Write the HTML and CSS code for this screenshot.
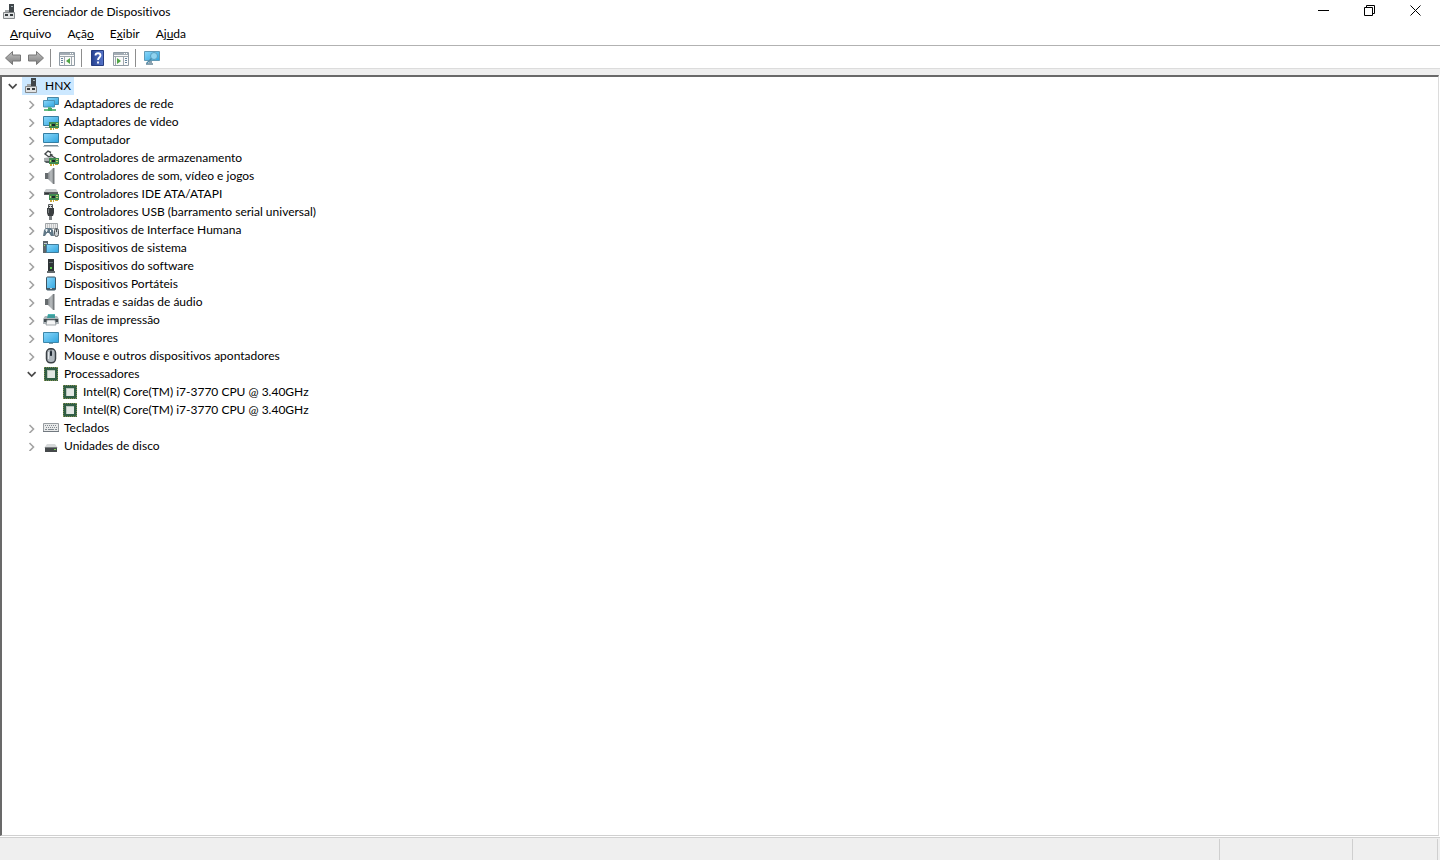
FILE: index.html
```html
<!DOCTYPE html>
<html lang="pt-BR">
<head>
<meta charset="utf-8">
<title>Gerenciador de Dispositivos</title>
<link rel="stylesheet" href="styles.css">
</head>
<body>
<svg class="defs" aria-hidden="true">
  <defs>
    <linearGradient id="g-screen" x1="0" y1="0" x2="1" y2="1"><stop offset="0" stop-color="#8bd8fb"/><stop offset="1" stop-color="#2fa4de"/></linearGradient>
    <linearGradient id="g-arrow" x1="0" y1="0" x2="0" y2="1"><stop offset="0" stop-color="#c2c2c2"/><stop offset="1" stop-color="#7c7c7c"/></linearGradient>
    <linearGradient id="g-metal" x1="0" y1="0" x2="1" y2="0"><stop offset="0" stop-color="#85898c"/><stop offset=".5" stop-color="#b9bdbf"/><stop offset="1" stop-color="#85898c"/></linearGradient>
    <linearGradient id="g-help" x1="0" y1="0" x2="1" y2="0"><stop offset="0" stop-color="#24408f"/><stop offset="1" stop-color="#5876cb"/></linearGradient>
  </defs>
  <symbol id="i-closed" viewBox="0 0 10 10"><path d="M2.500 2l4 4-4 4" fill="none" stroke="#a3a3a3" stroke-width="1.6"/></symbol>
  <symbol id="i-open" viewBox="0 0 10 10"><path d="M.8 3.200l3.900 3.800 3.900-3.800" fill="none" stroke="#484848" stroke-width="1.700"/></symbol>
  <symbol id="i-host" viewBox="0 0 16 16"><path d="M7 0h5v8H7z" fill="#40464a"/><path d="M9 2h2v1H9z" fill="#a7b4ba"/><path d="M3 6h4v3H3z" fill="#a4a8aa"/><path d="M1.500 8.500h11v6h-11z" fill="#e1e3e4" stroke="#85898b"/><path d="M3 10h3v2H3zM8 10h3v2H8z" fill="#353a3d"/></symbol>
  <symbol id="i-board" viewBox="0 0 10 8"><path d="M0 0h10v6H0z" fill="#3f8a50"/><path d="M1 6h2v2H1zM4 6h1v2H4zM6 6h3v1H6z" fill="#c9a938"/><path d="M3 2h3v2H3z" fill="#20262a"/><path d="M7 1h2v1H7zM7 3h2v1H7zM1 2h1v2H1z" fill="#c3d36c"/></symbol>
  <symbol id="i-network" viewBox="0 0 16 16"><path d="M4.500 1.500h11v7h-11z" fill="url(#g-screen)" stroke="#4886a4"/><path d="M.5 4.500h11v6.500H.5z" fill="url(#g-screen)" stroke="#4b92b5"/><path d="M5 11h3v2H5zM1 13h12v2H1z" fill="#66bb80"/><path d="M5 12h4v3H5z" fill="#40a764"/></symbol>
  <symbol id="i-video" viewBox="0 0 16 16"><path d="M.5 2.500h15v9H.5z" fill="url(#g-screen)" stroke="#397e9f"/><path d="M2 13h5v1H2z" fill="#94a2aa"/><use href="#i-board" x="6" y="8" width="10" height="8"/></symbol>
  <symbol id="i-computer" viewBox="0 0 16 16"><path d="M.5 1.500h15v9H.5z" fill="url(#g-screen)" stroke="#347ea3"/><path d="M1 13h14v1H1z" fill="#7c8d97"/><path d="M0 14h16v1H0z" fill="#b9c4ca"/></symbol>
  <symbol id="i-storage" viewBox="0 0 16 16"><path d="M8 2.500L5 1 2 4l4 3 3-2-2-1M7 5l7 4" fill="none" stroke="#44494b" stroke-width="1.400"/><path d="M1 8l7-1 6 2v3H2l-1-1z" fill="#a8adaf"/><path d="M1 11h7v2H3z" fill="#555e61"/><use href="#i-board" x="6" y="8" width="10" height="8"/></symbol>
  <symbol id="i-sound" viewBox="0 0 16 16"><path d="M2 5h3v6H2z" fill="#666b6e"/><path d="M5 5l5-5h1v16h-1l-5-5z" fill="url(#g-metal)"/><path d="M10 0h1.500v16H10z" fill="#777b7e"/></symbol>
  <symbol id="i-ide" viewBox="0 0 16 16"><path d="M3 3h10l2 3H1z" fill="#c5c9cb"/><path d="M1 6h14v3H1z" fill="#5a5f61"/><path d="M2 7h4v1H2z" fill="#303638"/><use href="#i-board" x="6" y="8" width="10" height="8"/></symbol>
  <symbol id="i-usb" viewBox="0 0 16 16"><path d="M5.500.5h4v4h-4z" fill="#d8dadb" stroke="#535759"/><path d="M6 2h1v1H6zM8 2h1v1H8z" fill="#333"/><path d="M4 4h7v5l-1 3H5L4 9z" fill="#3a3e40"/><path d="M5 5h1v4H5z" fill="#777c7e"/><path d="M6 12h3v4H6z" fill="#777c7e"/></symbol>
  <symbol id="i-hid" viewBox="0 0 16 16"><path d="M2.500 1.500h12v5h-12z" fill="#ececec" stroke="#a1a5a8"/><path d="M4 3h9M4 5h9" stroke="#9b9fa2" stroke-dasharray="1 1"/><path d="M1 8l2-2h5l2 2 1 6H8l-2-3H4l-2 3H0z" fill="#617887"/><path d="M2 8h3M3.500 7v3" stroke="#eef3f5"/><path d="M7 8h1v2H7z" fill="#fff"/><rect x="11.500" y="6.500" width="4" height="8" rx="2" fill="#cbd0d3" stroke="#52585c"/><path d="M13 7h1v3h-1z" fill="#4b5256"/></symbol>
  <symbol id="i-system" viewBox="0 0 16 16"><path d="M0 1h5v12H0z" fill="#5c6469"/><path d="M1 3h3v1H1z" fill="#c2d0d7"/><path d="M3.500 4.500h12v8h-12z" fill="url(#g-screen)" stroke="#407c9b"/><path d="M1 5h1v1H1z" fill="#8df05b"/></symbol>
  <symbol id="i-software" viewBox="0 0 16 16"><path d="M5 1h6v12H5z" fill="#2e3436"/><path d="M6 4h4v1H6z" fill="#677075"/><path d="M7 9h2v2H7z" fill="#59c94a"/><path d="M4 13h8v2H4z" fill="#62696c"/></symbol>
  <symbol id="i-portable" viewBox="0 0 16 16"><rect x="3.500" y="1" width="9" height="13" rx="1" fill="url(#g-screen)" stroke="#3d5462"/><path d="M4 12h8v2H4z" fill="#465b67"/><path d="M7 12h2v1H7z" fill="#b9cbd4"/></symbol>
  <symbol id="i-printer" viewBox="0 0 16 16"><path d="M5 2h7v4H4z" fill="#50b8b5"/><path d="M2 4h12l2 3v5H0V7z" fill="#aeb5b9"/><path d="M5 3h7v3H4z" fill="#3f9c9c"/><path d="M1 7h14v3H1z" fill="#424a4e"/><path d="M4 8h8l1 5H3z" fill="#f4f5f5" stroke="#7d858a" stroke-width=".7"/></symbol>
  <symbol id="i-monitor" viewBox="0 0 16 16"><path d="M.5 2.500h15v10H.5z" fill="url(#g-screen)" stroke="#3c87aa"/><path d="M6 13h4v1H6z" fill="#809aa7"/></symbol>
  <symbol id="i-mouse" viewBox="0 0 16 16"><rect x="3.500" y=".8" width="9" height="14" rx="4" fill="#b1b8be" stroke="#3b4146" stroke-width="1.500"/><path d="M8 1v7" stroke="#4b5359"/><rect x="7" y="3" width="2" height="5" rx="1" fill="#202a34"/><path d="M5.500 4v7" stroke="#e5e9ec"/></symbol>
  <symbol id="i-cpu" viewBox="0 0 16 16"><path d="M1 1h14v14H1z" fill="#315e45"/><path d="M1.500 1v14M14.500 1v14M1 1.500h14M1 14.500h14" stroke="#7f8d50" stroke-dasharray="1 1"/><path d="M4 4h8v8H4z" fill="#e2e7e4"/><path d="M4 4h8v1H5v7H4z" fill="#b9c4bd"/></symbol>
  <symbol id="i-keyboard" viewBox="0 0 16 16"><path d="M.5 3.500h15v8H.5z" fill="#e9eaea" stroke="#989da1"/><path d="M2 5.500h12M3 7.500h11" stroke="#828a91" stroke-dasharray="1 1"/><path d="M2 9.500h2M5 9.500h6M12 9.500h2" stroke="#828a91"/><path d="M0 11h16v1H0z" fill="#727980"/></symbol>
  <symbol id="i-disk" viewBox="0 0 16 16"><path d="M4 6h8l3 4H1z" fill="#d7d9da"/><path d="M2 9h12v5H2z" fill="#45494b"/><path d="M2 9h12v1H2z" fill="#7b8082"/><path d="M11 11h2v1h-2z" fill="#7bd453"/></symbol>
  <symbol id="i-back" viewBox="0 0 16 16"><path d="M.5 8l7-6.500V5h8v6h-8v3.500z" fill="url(#g-arrow)" stroke="#777"/></symbol>
  <symbol id="i-forward" viewBox="0 0 16 16"><path d="M15.500 8l-7-6.500V5h-8v6h8v3.500z" fill="url(#g-arrow)" stroke="#777"/></symbol>
  <symbol id="i-tree" viewBox="0 0 16 16"><path d="M.5 2.500h15v13H.5z" fill="#fafafa" stroke="#909ba4"/><path d="M1 3h14v2H1z" fill="#a4adb5"/><path d="M11 3h1v1h-1zM13 3h1v1h-1z" fill="#fff"/><path d="M1 6.500h14M5.500 7v8M12.500 7v8" stroke="#a0a8af"/><path d="M2 8.500h2M2 10.500h2M2 12.500h2" stroke="#67849d"/><path d="M11 8v6l-4-3z" fill="#4fa544"/></symbol>
  <symbol id="i-action" viewBox="0 0 16 16"><path d="M.5 2.500h15v13H.5z" fill="#fafafa" stroke="#909ba4"/><path d="M1 3h14v2H1z" fill="#a4adb5"/><path d="M11 3h1v1h-1zM13 3h1v1h-1z" fill="#fff"/><path d="M1 6.500h14M2.500 7v8M10.500 7v8" stroke="#a0a8af"/><path d="M12 8.500h2M12 10.500h2M12 12.500h2" stroke="#67849d"/><path d="M4 8v6l4-3z" fill="#4fa544"/></symbol>
  <symbol id="i-help" viewBox="0 0 16 16"><path d="M1.500.5h12v15h-12z" fill="url(#g-help)" stroke="#263c7f"/><path d="M5.500 5.500c0-3 5-3 5 0 0 2-2.500 2-2.500 4.500M8 11.500v2" fill="none" stroke="#fff" stroke-width="1.800"/></symbol>
  <symbol id="i-scan" viewBox="0 0 16 16"><path d="M.5 1.500h15v9H.5z" fill="url(#g-screen)" stroke="#609ab7"/><path d="M5 11h3v2H5zM2 13h7v2H2z" fill="#8ba2b0"/><circle cx="10" cy="6" r="3.500" fill="#8fd3f0" stroke="#5b9fc0"/><path d="M7.500 8.500l-5 5" stroke="#4e89a8" stroke-width="1.500"/></symbol>
</svg>

<div class="window">
  <header class="titlebar">
    <svg class="icon"><use href="#i-host"/></svg>
    <h1 class="title">Gerenciador de Dispositivos</h1>
    <div class="controls">
      <button class="control" aria-label="Minimizar"><svg class="glyph" viewBox="0 0 11 11"><path d="M0 5.500h11"/></svg></button>
      <button class="control" aria-label="Restaurar"><svg class="glyph" viewBox="0 0 11 11"><path d="M.5 2.500h8v8h-8zM2.500 2.500v-2h8v8h-2"/></svg></button>
      <button class="control" aria-label="Fechar"><svg class="glyph" viewBox="0 0 11 11"><path d="M.5.5l10 10M10.500.5l-10 10"/></svg></button>
    </div>
  </header>

  <nav class="menubar" aria-label="Menu">
    <button class="menu"><u>A</u>rquivo</button>
    <button class="menu">Açã<u>o</u></button>
    <button class="menu">E<u>x</u>ibir</button>
    <button class="menu">Aj<u>u</u>da</button>
  </nav>

  <div class="toolbar" role="toolbar" aria-label="Ferramentas">
    <button class="tool" aria-label="Voltar"><svg class="icon"><use href="#i-back"/></svg></button>
    <button class="tool" aria-label="Avançar"><svg class="icon"><use href="#i-forward"/></svg></button>
    <span class="separator"></span>
    <button class="tool" aria-label="Mostrar árvore de console"><svg class="icon"><use href="#i-tree"/></svg></button>
    <span class="separator"></span>
    <button class="tool" aria-label="Ajuda"><svg class="icon"><use href="#i-help"/></svg></button>
    <button class="tool" aria-label="Mostrar painel de ações"><svg class="icon"><use href="#i-action"/></svg></button>
    <span class="separator"></span>
    <button class="tool" aria-label="Verificar alterações de hardware"><svg class="icon"><use href="#i-scan"/></svg></button>
  </div>

  <main class="tree-pane">
    <ul class="tree">
      <li>
        <div class="row"><button class="toggle" aria-label="Recolher" aria-expanded="true"><svg class="chevron"><use href="#i-open"/></svg></button><button class="node selected"><svg class="icon"><use href="#i-host"/></svg>HNX</button></div>
        <ul class="tree branch">
          <li class="row"><button class="toggle" aria-label="Expandir"><svg class="chevron"><use href="#i-closed"/></svg></button><button class="node"><svg class="icon"><use href="#i-network"/></svg>Adaptadores de rede</button></li>
          <li class="row"><button class="toggle" aria-label="Expandir"><svg class="chevron"><use href="#i-closed"/></svg></button><button class="node"><svg class="icon"><use href="#i-video"/></svg>Adaptadores de vídeo</button></li>
          <li class="row"><button class="toggle" aria-label="Expandir"><svg class="chevron"><use href="#i-closed"/></svg></button><button class="node"><svg class="icon"><use href="#i-computer"/></svg>Computador</button></li>
          <li class="row"><button class="toggle" aria-label="Expandir"><svg class="chevron"><use href="#i-closed"/></svg></button><button class="node"><svg class="icon"><use href="#i-storage"/></svg>Controladores de armazenamento</button></li>
          <li class="row"><button class="toggle" aria-label="Expandir"><svg class="chevron"><use href="#i-closed"/></svg></button><button class="node"><svg class="icon"><use href="#i-sound"/></svg>Controladores de som, vídeo e jogos</button></li>
          <li class="row"><button class="toggle" aria-label="Expandir"><svg class="chevron"><use href="#i-closed"/></svg></button><button class="node"><svg class="icon"><use href="#i-ide"/></svg>Controladores IDE ATA/ATAPI</button></li>
          <li class="row"><button class="toggle" aria-label="Expandir"><svg class="chevron"><use href="#i-closed"/></svg></button><button class="node"><svg class="icon"><use href="#i-usb"/></svg>Controladores USB (barramento serial universal)</button></li>
          <li class="row"><button class="toggle" aria-label="Expandir"><svg class="chevron"><use href="#i-closed"/></svg></button><button class="node"><svg class="icon"><use href="#i-hid"/></svg>Dispositivos de Interface Humana</button></li>
          <li class="row"><button class="toggle" aria-label="Expandir"><svg class="chevron"><use href="#i-closed"/></svg></button><button class="node"><svg class="icon"><use href="#i-system"/></svg>Dispositivos de sistema</button></li>
          <li class="row"><button class="toggle" aria-label="Expandir"><svg class="chevron"><use href="#i-closed"/></svg></button><button class="node"><svg class="icon"><use href="#i-software"/></svg>Dispositivos do software</button></li>
          <li class="row"><button class="toggle" aria-label="Expandir"><svg class="chevron"><use href="#i-closed"/></svg></button><button class="node"><svg class="icon"><use href="#i-portable"/></svg>Dispositivos Portáteis</button></li>
          <li class="row"><button class="toggle" aria-label="Expandir"><svg class="chevron"><use href="#i-closed"/></svg></button><button class="node"><svg class="icon"><use href="#i-sound"/></svg>Entradas e saídas de áudio</button></li>
          <li class="row"><button class="toggle" aria-label="Expandir"><svg class="chevron"><use href="#i-closed"/></svg></button><button class="node"><svg class="icon"><use href="#i-printer"/></svg>Filas de impressão</button></li>
          <li class="row"><button class="toggle" aria-label="Expandir"><svg class="chevron"><use href="#i-closed"/></svg></button><button class="node"><svg class="icon"><use href="#i-monitor"/></svg>Monitores</button></li>
          <li class="row"><button class="toggle" aria-label="Expandir"><svg class="chevron"><use href="#i-closed"/></svg></button><button class="node"><svg class="icon"><use href="#i-mouse"/></svg>Mouse e outros dispositivos apontadores</button></li>
          <li>
            <div class="row"><button class="toggle" aria-label="Recolher" aria-expanded="true"><svg class="chevron"><use href="#i-open"/></svg></button><button class="node"><svg class="icon"><use href="#i-cpu"/></svg>Processadores</button></div>
            <ul class="tree branch">
              <li class="row leaf"><button class="node"><svg class="icon"><use href="#i-cpu"/></svg>Intel(R) Core(TM) i7-3770 CPU @ 3.40GHz</button></li>
              <li class="row leaf"><button class="node"><svg class="icon"><use href="#i-cpu"/></svg>Intel(R) Core(TM) i7-3770 CPU @ 3.40GHz</button></li>
            </ul>
          </li>
          <li class="row"><button class="toggle" aria-label="Expandir"><svg class="chevron"><use href="#i-closed"/></svg></button><button class="node"><svg class="icon"><use href="#i-keyboard"/></svg>Teclados</button></li>
          <li class="row"><button class="toggle" aria-label="Expandir"><svg class="chevron"><use href="#i-closed"/></svg></button><button class="node"><svg class="icon"><use href="#i-disk"/></svg>Unidades de disco</button></li>
        </ul>
      </li>
    </ul>
  </main>

  <footer class="statusbar">
    <span class="status-main"></span>
    <span class="status-cell status-wide"></span>
    <span class="status-cell status-last"></span>
  </footer>
</div>
</body>
</html>
```
FILE: styles.css
```css
* {
  box-sizing: border-box;
}

body {
  margin: 0;
  background: #fff;
  color: #000;
  font: 12px/18px Lato, "Noto Sans", sans-serif;
  font-variant-ligatures: none;
}

button {
  margin: 0;
  padding: 0;
  border: 0;
  background: none;
  color: inherit;
  font: inherit;
  font-variant-ligatures: none;
}

.defs {
  position: absolute;
  width: 0;
  height: 0;
}

.window {
  display: flex;
  flex-direction: column;
  height: 100vh;
}

.icon {
  display: block;
  flex: none;
  width: 16px;
  height: 16px;
}

.titlebar {
  display: flex;
  align-items: center;
  height: 24px;
  padding: 0 2px;
}

.title {
  flex: 1;
  margin: 0;
  padding-left: 5px;
  font-size: 12px;
  font-weight: 400;
}

.controls {
  display: flex;
  align-self: flex-start;
}

.control {
  display: grid;
  place-items: center;
  width: 46px;
  height: 21px;
}

.glyph {
  width: 11px;
  height: 11px;
  fill: none;
  stroke: #000;
}

.menubar {
  display: flex;
  height: 21px;
  padding: 0 2px 2px;
}

.menu {
  padding: 0 8px;
}

.toolbar {
  display: flex;
  align-items: center;
  height: 24px;
  margin-bottom: 6px;
  padding: 1px 1px 0;
  border-top: 1px solid #b2b2b2;
  border-bottom: 1px solid #dcdcdc;
  box-shadow: 0 6px #efefef;
}

.tool {
  padding: 0 3px 0 4px;
}

.separator {
  width: 1px;
  height: 18px;
  margin: 0 4px 0 3px;
  background: #8d8d8d;
}

.tree-pane {
  flex: 1;
  min-height: 0;
  overflow: auto;
  margin-right: 1px;
  border: solid #696969;
  border-width: 2px 1px 1px 2px;
  border-right-color: #dcdcdc;
  border-bottom-color: #d0d0d0;
}

.tree {
  margin: 0;
  padding: 0;
  list-style: none;
}

.branch {
  padding-left: 19px;
}

.row {
  display: flex;
  height: 18px;
  padding-left: 1px;
}

.leaf {
  padding-left: 20px;
}

.toggle {
  display: grid;
  place-items: center;
  width: 19px;
}

.chevron {
  width: 10px;
  height: 10px;
}

.node {
  display: flex;
  align-items: center;
  gap: 5px;
  padding: 0 3px 0 2px;
}

.selected {
  background: #cce8ff;
}

.statusbar {
  display: flex;
  height: 23px;
  margin-top: 1px;
  padding-right: 2px;
  border-top: 1px solid #d0d0d0;
  background: #efefef;
}

.status-main {
  flex: 1;
}

.status-cell {
  width: 86px;
  margin-top: 1px;
  border-left: 1px solid #cfcfcf;
}

.status-wide {
  width: 133px;
}

.status-last {
  border-right: 1px solid #cfcfcf;
}
```
